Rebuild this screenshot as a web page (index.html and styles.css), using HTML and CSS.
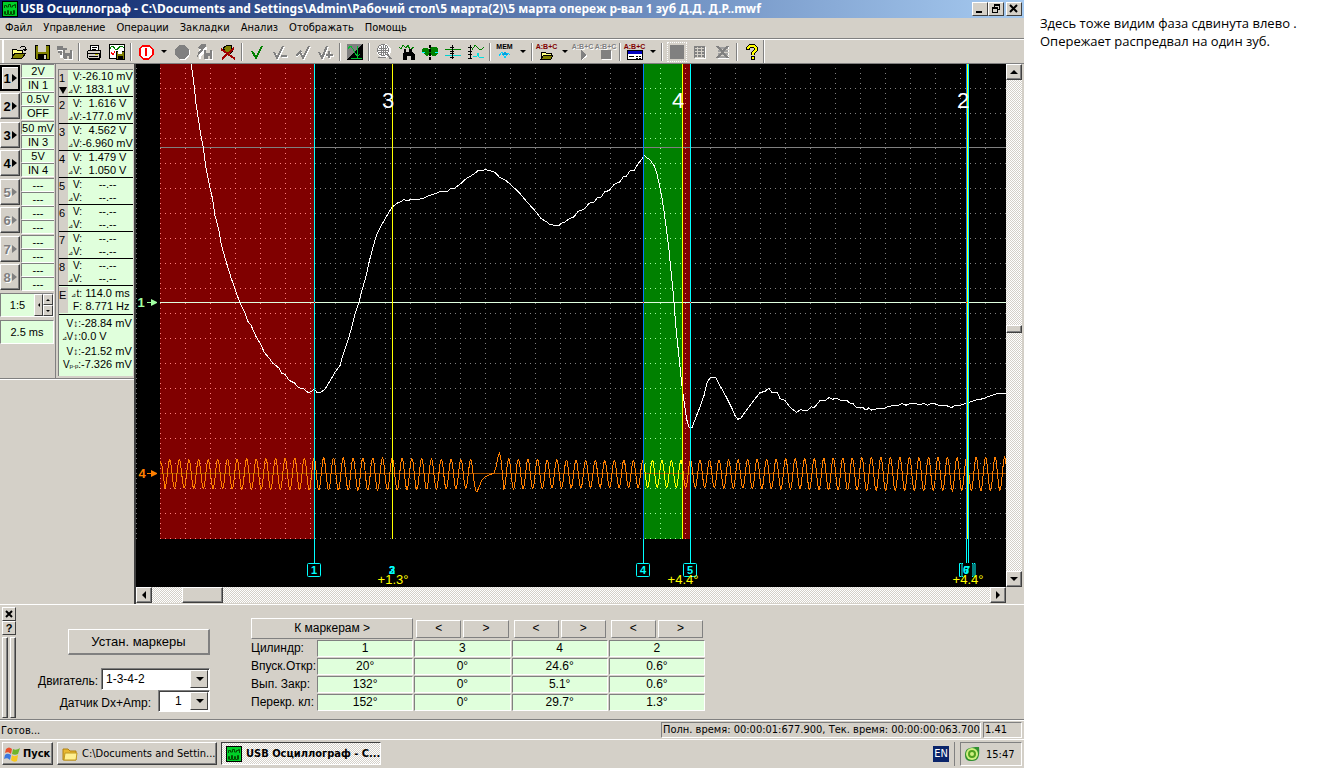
FILE: index.html
```html
<!DOCTYPE html>
<html lang="ru">
<head>
<meta charset="utf-8">
<title>USB Осциллограф</title>
<link rel="stylesheet" href="styles.css">
</head>
<body>
<svg class="defs" aria-hidden="true">
  <symbol id="i-scope" viewBox="0 0 16 16"><rect width="16" height="16" fill="#000"/><rect x="1" y="1" width="14" height="14" fill="#00d028"/><path d="M2.500 7V4.500h2V6h2V3.500h2V6h2V4.500h2V3.500h1V7M2.500 13.500v-3h1v3h2v-4h1v4h2v-3h1v3h2v-4h1v4" fill="none" stroke="#005000"/></symbol>
  <symbol id="i-open" viewBox="0 0 16 16"><path d="M1 14V5h4l1 1h5v3" fill="#ffff80" stroke="#000"/><path d="M1 14l3-5h11l-4 5z" fill="#808000" stroke="#000"/><path d="M9 3h1l1-1h2l1 1v2M12 5h4M13 6h2" fill="none" stroke="#000"/></symbol>
  <symbol id="i-save" viewBox="0 0 16 16"><path d="M1 1h14v14H2l-1-1z" fill="#808000" stroke="#000"/><rect x="4" y="1" width="8" height="7" fill="#d4d0c8"/><rect x="4" y="10" width="9" height="5" fill="#000"/><rect x="10" y="11" width="2" height="4" fill="#d4d0c8"/></symbol>
  <symbol id="i-saves" viewBox="0 0 16 16"><path d="M0 2h5v2h4v3H0zM2 8h3v5H2zM6 6h9v9H6z" fill="#fff" transform="translate(1 1)"/><path d="M0 2h6v2h4v2H0zM1 7h4v4H3V9H1zM6 6h9v9H7l-1-1z" fill="#808080"/><path d="M8 6h5v3H8zM10 12h2v3h-2z" fill="#d4d0c8"/></symbol>
  <symbol id="i-print" viewBox="0 0 16 16"><path d="M4 6l1-5h8l-1 5" fill="#fff" stroke="#000"/><path d="M6 3h5M6 5h4" stroke="#000"/><path d="M1 8l2-2h12l-1 8H2z" fill="#d4d0c8" stroke="#000"/><path d="M1 9h12M3 12h9M13 9v5M3 15h11" stroke="#000"/><rect x="9" y="10" width="3" height="1" fill="#c0c000"/></symbol>
  <symbol id="i-plotsave" viewBox="0 0 16 16"><rect x=".5" y=".5" width="15" height="14" fill="#fff" stroke="#000"/><path d="M1 5c2-5 3-3 5 0s4-3 6-3 2 2 3 2" fill="none" stroke="#008000"/><path d="M2 8l2 3 2-4" fill="none" stroke="red"/><path d="M7 7h8v8H7z" fill="#808000" stroke="#000"/><path d="M9 7h4v3H9z" fill="#fff"/><path d="M9 12h5v3H9z" fill="#000"/></symbol>
  <symbol id="i-power" viewBox="0 0 16 16"><path d="M5 1.500h6l3.500 3.500v6L11 14.500H5L1.500 11V5z" fill="#fff" stroke="#f00" stroke-width="2"/><path d="M8 4v8" stroke="#f00" stroke-width="2"/></symbol>
  <symbol id="i-rec" viewBox="0 0 16 16"><circle cx="9" cy="9" r="7" fill="#fff"/><circle cx="8" cy="8" r="7" fill="#808080"/></symbol>
  <symbol id="i-hand" viewBox="0 0 16 16"><path d="M1 4l4-3 4 1v4h6v9H7V8L3 11v3H1z" fill="#fff" transform="translate(1 1)"/><path d="M0 4l4-4h5v3L6 5v2l-4 3-2 4 1-6 3-3zM7 6h8v9H7z" fill="#808080"/><path d="M9 6h4v3H9zM11 12h2v3h-2z" fill="#d4d0c8"/></symbol>
  <symbol id="i-nohand" viewBox="0 0 16 16"><path d="M3 4l5-3h3v4l2 2-4 4-4-4z" fill="#808000" stroke="#000"/><path d="M1 5l14 10M14 4L2 15" stroke="#a00000" stroke-width="2"/></symbol>
  <symbol id="i-check" viewBox="0 0 16 16"><path d="M3 7l4 7L13 2" fill="none" stroke="#008000" stroke-width="2"/></symbol>
  <symbol id="i-checkr" viewBox="0 0 16 16"><path d="M3 9l3 6L12 3M10 13h6" fill="none" stroke="#fff" stroke-width="2"/><path d="M2 8l3 6L11 2M9 12h6" fill="none" stroke="#808080" stroke-width="2"/></symbol>
  <symbol id="i-checkl" viewBox="0 0 16 16"><path d="M6 9l3 6L15 3M1 13l5-5" fill="none" stroke="#fff" stroke-width="2"/><path d="M5 8l3 6L14 2M1 12l5-5" fill="none" stroke="#808080" stroke-width="2"/></symbol>
  <symbol id="i-checkp" viewBox="0 0 16 16"><path d="M2 9l3 6L10 3M8 12h8M12 8v7" fill="none" stroke="#fff" stroke-width="2"/><path d="M1 8l3 6L9 2M8 11h7M11 7v7" fill="none" stroke="#808080" stroke-width="2"/></symbol>
  <symbol id="i-xy" viewBox="0 0 16 16"><rect width="16" height="16" fill="#000"/><path d="M0 0h15L0 15z" fill="#808080"/><path d="M1 5l2-3h1l6 10h1l2-2M10 2v12M4 14.500h11" fill="none" stroke="#00c030"/></symbol>
  <symbol id="i-find" viewBox="0 0 16 16"><circle cx="8" cy="7" r="7" fill="#fff"/><circle cx="7" cy="6" r="5.500" fill="none" stroke="#808080"/><path d="M3 4h8M2 6h10M3 8h8M5 2v9M7 1v11M9 2v9" stroke="#808080"/><path d="M11 10l4 5" stroke="#808080" stroke-width="2"/><path d="M2 13h8" stroke="#808080"/></symbol>
  <symbol id="i-bino" viewBox="0 0 16 16"><path d="M0 3l2 2 2-4 3 3 2-3 2 5 4-3" fill="none" stroke="#008000"/><path d="M5 5h2v3h3V5h3v3l3 3v5h-4v-4H8v4H4v-5l1-3z" fill="#000"/></symbol>
  <symbol id="i-wave1" viewBox="0 0 16 16"><path d="M0 5l2-1h3l2 2 2-3h5l2 2v4l-2 3h-4l-2-3-2 3H4L2 9H0z" fill="#008000"/><path d="M0 8.500h3M13 8.500h3" stroke="#00ffff"/><path d="M8 1v15" stroke="#000" stroke-width="2" stroke-dasharray="3 1"/></symbol>
  <symbol id="i-wave2" viewBox="0 0 16 16"><path d="M0 5h16" stroke="#008000"/><path d="M0 11h16" stroke="#00d0d0"/><path d="M7 1v14M5 3h4M5 7h4M5 9h4M5 13h4" stroke="#000"/></symbol>
  <symbol id="i-wave3" viewBox="0 0 16 16"><path d="M4 6c3-6 4-5 6-2s4 2 6-1" fill="none" stroke="#008000"/><path d="M5 12h4l1-3 1 4h5" fill="none" stroke="#00e0e0"/><path d="M2 1v14M0 3h4M0 7h4M0 10h4M0 14h4" stroke="#000"/></symbol>
  <symbol id="i-folder" viewBox="0 0 16 10"><path d="M2 9V2h4l1 1h5v2" fill="#ffff80" stroke="#000"/><path d="M2 9l3-4h9l-2 4z" fill="#808000" stroke="#000"/></symbol>
  <symbol id="i-play" viewBox="0 0 16 10"><path d="M7 1l6 5-6 4z" fill="#fff"/><path d="M6 0l6 5-6 5z" fill="#808080"/></symbol>
  <symbol id="i-stop" viewBox="0 0 16 10"><path d="M4 1h10v9H4z" fill="#fff"/><path d="M3 0h10v9H3z" fill="#808080"/></symbol>
  <symbol id="i-panel" viewBox="0 0 16 10"><path d="M.5.5h15v9H.5z" fill="#fff" stroke="#000"/><path d="M1 1h14v3H1z" fill="#0000c0"/><path d="M2 6h5M9 6h2M12 6h2M9 8h2M12 8h2" stroke="#000"/></symbol>
  <symbol id="i-memwave" viewBox="0 0 16 10"><path d="M2 6l3-4 3 6 3-5 2 2" fill="none" stroke="#00d0ff"/><path d="M5 5l3-4 3 4z" fill="#00a0e0"/></symbol>
  <symbol id="i-grid" viewBox="0 0 16 16"><path d="M3 3h11v12H3z" fill="#fff"/><path d="M2 2h11v12H2z" fill="#808080"/><path d="M3 4h9M3 7h9M3 10h9M3 13h9M5 3v11M9 3v11" stroke="#d4d0c8"/></symbol>
  <symbol id="i-gridx" viewBox="0 0 16 16"><path d="M3 3h11v12H3z" fill="#fff"/><path d="M3 3h10v11H3z" fill="#a0a0a0"/><path d="M2 5h12M2 8h12M2 11h12" stroke="#d4d0c8"/><path d="M2 2l11 12M13 2L2 14" stroke="#808080" stroke-width="2"/></symbol>
  <symbol id="i-help" viewBox="0 0 16 16"><path d="M4 6V4l2-2h4l2 2v2L9 9v2" fill="none" stroke="#000" stroke-width="4"/><path d="M7 12h4v4H7z" fill="#000"/><path d="M4 5V4l2-2h4l2 2v2L9 9v2" fill="none" stroke="#ff0" stroke-width="2"/><path d="M8 13h2v2H8z" fill="#ff0"/></symbol>
</svg>

<div class="desktop">
  <div class="screen">
    <header class="titlebar">
      <svg class="i16"><use href="#i-scope"/></svg>
      <h1>USB Осциллограф - C:\Documents and Settings\Admin\Рабочий стол\5 марта(2)\5 марта опереж р-вал 1 зуб Д.Д. Д.Р..mwf</h1>
      <div class="winbtns">
        <button class="winbtn" aria-label="Свернуть"><svg width="12" height="10"><path d="M2 7h6v2H2z"/></svg></button>
        <button class="winbtn" aria-label="Восстановить"><svg width="12" height="10"><path d="M4 0h6v6H8V5h1V2H5v1H4zM2 3h6v6H2zm1 2v3h4V5z" fill-rule="evenodd"/></svg></button>
        <button class="winbtn close" aria-label="Закрыть"><svg width="12" height="10"><path d="M2 1l7 7M9 1L2 8" stroke="#000" stroke-width="2"/></svg></button>
      </div>
    </header>

    <nav class="menubar">
      <button>Файл</button><button>Управление</button><button>Операции</button><button>Закладки</button><button>Анализ</button><button>Отображать</button><button>Помощь</button>
    </nav>

    <div class="toolbar-row">
      <div class="toolbar">
        <button class="tool" aria-label="Открыть"><svg class="i16"><use href="#i-open"/></svg></button>
        <button class="tool" aria-label="Сохранить"><svg class="i16"><use href="#i-save"/></svg></button>
        <button class="tool" aria-label="Сохранить все"><svg class="i16"><use href="#i-saves"/></svg></button>
        <span class="sep"></span>
        <button class="tool" aria-label="Печать"><svg class="i16"><use href="#i-print"/></svg></button>
        <button class="tool" aria-label="Сохранить рисунок"><svg class="i16"><use href="#i-plotsave"/></svg></button>
        <span class="sep"></span>
        <button class="tool" aria-label="Питание"><svg class="i16"><use href="#i-power"/></svg></button>
        <button class="drop" aria-label="Меню питания"></button>
        <button class="tool" aria-label="Запись"><svg class="i16"><use href="#i-rec"/></svg></button>
        <button class="tool" aria-label="Захват"><svg class="i16"><use href="#i-hand"/></svg></button>
        <button class="tool" aria-label="Сброс"><svg class="i16"><use href="#i-nohand"/></svg></button>
        <span class="sep"></span>
        <button class="tool" aria-label="Отметить"><svg class="i16"><use href="#i-check"/></svg></button>
        <button class="tool" aria-label="Снять"><svg class="i16"><use href="#i-checkr"/></svg></button>
        <button class="tool" aria-label="Назад"><svg class="i16"><use href="#i-checkl"/></svg></button>
        <button class="tool" aria-label="Вперед"><svg class="i16"><use href="#i-checkp"/></svg></button>
        <span class="sep"></span>
        <button class="tool" aria-label="XY"><svg class="i16"><use href="#i-xy"/></svg></button>
        <span class="sep"></span>
        <button class="tool" aria-label="Поиск"><svg class="i16"><use href="#i-find"/></svg></button>
        <button class="tool" aria-label="Найти сигнал"><svg class="i16"><use href="#i-bino"/></svg></button>
        <button class="tool" aria-label="Уровень"><svg class="i16"><use href="#i-wave1"/></svg></button>
        <button class="tool" aria-label="Разделить"><svg class="i16"><use href="#i-wave2"/></svg></button>
        <button class="tool" aria-label="Масштаб"><svg class="i16"><use href="#i-wave3"/></svg></button>
        <span class="sep"></span>
        <button class="tool stacked"><b class="mem">MEM</b><svg class="i10"><use href="#i-memwave"/></svg></button>
        <button class="drop" aria-label="Меню памяти"></button>
        <span class="sep"></span>
        <button class="tool stacked"><b class="abc">A:B+C</b><svg class="i10"><use href="#i-folder"/></svg></button>
        <button class="drop" aria-label="Меню сценариев"></button>
        <button class="tool stacked"><b class="abc off">A:B+C</b><svg class="i10"><use href="#i-play"/></svg></button>
        <button class="tool stacked"><b class="abc off">A:B+C</b><svg class="i10"><use href="#i-stop"/></svg></button>
        <span class="sep"></span>
        <button class="tool stacked"><b class="abc">A:B+C</b><svg class="i10"><use href="#i-panel"/></svg></button>
        <button class="drop" aria-label="Меню панелей"></button>
        <span class="sep"></span>
        <button class="tool" aria-label="Стоп"><span class="stopbox"></span></button>
        <button class="tool" aria-label="Сетка"><svg class="i16"><use href="#i-grid"/></svg></button>
        <button class="tool" aria-label="Убрать сетку"><svg class="i16"><use href="#i-gridx"/></svg></button>
        <span class="sep"></span>
        <button class="tool" aria-label="Справка"><svg class="i16"><use href="#i-help"/></svg></button>
      </div>
    </div>

    <main class="work">
      <aside class="side">
        <div class="channels">
          <div class="ch"><button class="sel">1</button><span>2V</span><span>IN 1</span></div>
          <div class="ch"><button>2</button><span>0.5V</span><span>OFF</span></div>
          <div class="ch"><button>3</button><span>50 mV</span><span>IN 3</span></div>
          <div class="ch"><button>4</button><span>5V</span><span>IN 4</span></div>
          <div class="ch off"><button disabled>5</button><span>---</span><span>---</span></div>
          <div class="ch off"><button disabled>6</button><span>---</span><span>---</span></div>
          <div class="ch off"><button disabled>7</button><span>---</span><span>---</span></div>
          <div class="ch off"><button disabled>8</button><span>---</span><span>---</span></div>
          <div class="ratio"><span>1:5</span><button class="wide" aria-label="Сброс масштаба"><i class="tri left"></i></button><div class="spin"><button aria-label="Больше"><i class="tri up"></i></button><button aria-label="Меньше"><i class="tri down"></i></button></div></div>
          <div class="timebase">2.5 ms</div>
        </div>
        <div class="meters">
          <div class="m"><b>1<i class="tri down big"></i></b><em>V:</em><span>-26.10 mV</span><em><small>⊿</small>V:</em><span>183.1 uV</span></div>
          <div class="m"><b>2</b><em>V:</em><span>1.616 V</span><em><small>⊿</small>V:</em><span>-177.0 mV</span></div>
          <div class="m"><b>3</b><em>V:</em><span>4.562 V</span><em><small>⊿</small>V:</em><span>-6.960 mV</span></div>
          <div class="m"><b>4</b><em>V:</em><span>1.479 V</span><em><small>⊿</small>V:</em><span>1.050 V</span></div>
          <div class="m"><b>5</b><em>V:</em><span>--.--</span><em><small>⊿</small>V:</em><span>--.--</span></div>
          <div class="m"><b>6</b><em>V:</em><span>--.--</span><em><small>⊿</small>V:</em><span>--.--</span></div>
          <div class="m"><b>7</b><em>V:</em><span>--.--</span><em><small>⊿</small>V:</em><span>--.--</span></div>
          <div class="m"><b>8</b><em>V:</em><span>--.--</span><em><small>⊿</small>V:</em><span>--.--</span></div>
          <div class="m"><b>E</b><em><small>⊿</small>t:</em><span>114.0 ms</span><em>F:</em><span>8.771 Hz</span></div>
          <dl class="range">
            <dt>V↕:</dt><dd>-28.84 mV</dd>
            <dt><small>⊿</small>V↕:</dt><dd>0.0 V</dd>
            <dt>V↕:</dt><dd>-21.52 mV</dd>
            <dt>V<small>p-p</small>:</dt><dd>-7.326 mV</dd>
          </dl>
        </div>
      </aside>

      <section class="scope">
        <svg class="plot" viewBox="0 0 870 523" preserveAspectRatio="xMinYMin slice" role="img" aria-label="Осциллограмма">
          <defs>
            <pattern id="dots" width="25" height="25" patternUnits="userSpaceOnUse"><path fill="#808080" d="M24 4h1v1h-1zM24 9h1v1h-1zM24 14h1v1h-1zM24 19h1v1h-1zM4 24h1v1h-1zM9 24h1v1h-1zM14 24h1v1h-1zM19 24h1v1h-1zM24 24h1v1h-1z"/></pattern>
            <pattern id="dotsRed" width="25" height="25" patternUnits="userSpaceOnUse"><path fill="#ff8080" d="M24 4h1v1h-1zM24 9h1v1h-1zM24 14h1v1h-1zM24 19h1v1h-1zM4 24h1v1h-1zM9 24h1v1h-1zM14 24h1v1h-1zM19 24h1v1h-1zM24 24h1v1h-1z"/></pattern>
            <pattern id="dotsGreen" width="25" height="25" patternUnits="userSpaceOnUse"><path fill="#a0ffa0" d="M24 4h1v1h-1zM24 9h1v1h-1zM24 14h1v1h-1zM24 19h1v1h-1zM4 24h1v1h-1zM9 24h1v1h-1zM14 24h1v1h-1zM19 24h1v1h-1zM24 24h1v1h-1z"/></pattern>
            <clipPath id="inGreen"><rect x="508" width="38" height="475"/></clipPath>
          </defs>
          <rect width="870" height="523" fill="#000"/>
          <rect x="24" width="846" height="475" fill="url(#dots)"/>
          <path d="M.5 4v471" stroke="#808080" stroke-dasharray="1 4"/>
          <g><rect x="24" width="154" height="475" fill="#800000"/><rect x="24" width="154" height="475" fill="url(#dotsRed)"/></g>
          <g><rect x="547" width="7" height="475" fill="#800000"/><rect x="547" width="7" height="475" fill="url(#dotsRed)"/></g>
          <g><rect x="508" width="38" height="475" fill="#008000"/><rect x="508" width="38" height="475" fill="url(#dotsGreen)"/></g>
          <path d="M24 83.5h846" stroke="#808080"/>
          <path d="M24 409.5h846" stroke="#a05000"/>
          <path d="M24 238.5h846" stroke="#e0ffe0"/>
          <path id="wave4" class="trace orange"/>
          <path id="wave4g" class="trace yellow" clip-path="url(#inGreen)"/>
          <path id="wave1" class="trace white"/>
          <g class="cursors">
            <path d="M178.5 0v499M554.5 0v499M507.5 475v24M830.5 475v24M832.5 0v499" stroke="#0ff"/>
            <path d="M507.5 0v475M830.5 0v475" stroke="#0080ff"/>
            <path d="M256.5 0v475M546.5 0v475M831.5 0v475" stroke="#ff0"/>
            <path d="M178 238h1v1h-1zM507 238h1v1h-1zM554 238h1v1h-1zM830 238h1v1h-1z" fill="#f00"/>
          </g>
          <g class="boxes">
            <rect x="171.500" y="499.500" width="13" height="13" rx="1"/><rect x="500.500" y="499.500" width="13" height="13" rx="1"/><rect x="547.500" y="499.500" width="13" height="13" rx="1"/>
            <path d="M825.500 499.500h-2v13h2M827 499.500h-1v13h1M836 499.500h1v13h-1M838 499.500h1v13h-1"/>
          </g>
          <g class="ids"><text x="178" y="510">1</text><text x="256" y="510">2</text><text x="256" y="510">3</text><text x="507" y="510">4</text><text x="554" y="510">5</text><text x="830" y="510">6</text><text x="831" y="510">7</text></g>
          <g class="angles"><text x="257" y="520">+1.3°</text><text x="547" y="520">+4.4°</text><text x="832" y="520">+4.4°</text></g>
          <g class="cyl"><text x="252" y="44">3</text><text x="542" y="44">4</text><text x="827" y="44">2</text></g>
          <g class="chid"><text x="5" y="243" fill="#a0ffa0">1</text><path d="M11 238h4v-3l6 3v1l-6 3v-3h-4z" fill="#a0ffa0"/><text x="6" y="414" fill="#ff8000">4</text><path d="M11 409h4v-3l6 3v1l-6 3v-3h-4z" fill="#ff8000"/></g>
        </svg>
        <div class="vscroll"><button aria-label="Вверх"><i class="tri up"></i></button><i class="gap-a"></i><i class="thumb"></i><i class="gap-b"></i><button aria-label="Вниз"><i class="tri down"></i></button></div>
        <div class="hscroll"><button aria-label="Влево"><i class="tri left"></i></button><i class="gap-a"></i><i class="thumb"></i><i class="gap-b"></i><button aria-label="Вправо"><i class="tri right"></i></button></div>
      </section>
    </main>

    <section class="dock">
      <div class="dock-grip"><button aria-label="Закрыть панель"><svg width="9" height="9"><path d="M1 1l6 6M7 1L1 7" stroke="#000" stroke-width="2"/></svg></button><button>?</button><div class="bars"><i></i><i></i></div></div>
      <form class="setup">
        <button type="button" class="btn set">Устан. маркеры</button>
        <div class="field engine"><label for="engine">Двигатель:</label><span class="combo"><select id="engine"><option>1-3-4-2</option></select></span></div>
        <div class="field"><label for="sensor">Датчик Dx+Amp:</label><span class="combo small"><select id="sensor"><option>1</option></select></span></div>
      </form>
      <table class="angles-table">
        <colgroup><col class="names"><col><col><col><col></colgroup>
        <thead><tr>
          <td colspan="2"><button class="btn goto">К маркерам &gt;</button></td>
          <td><div class="pair"><button class="btn">&lt;</button><button class="btn">&gt;</button></div></td>
          <td><div class="pair"><button class="btn">&lt;</button><button class="btn">&gt;</button></div></td>
          <td><div class="pair"><button class="btn">&lt;</button><button class="btn">&gt;</button></div></td>
        </tr></thead>
        <tbody>
          <tr><th scope="row">Цилиндр:</th><td>1</td><td>3</td><td>4</td><td>2</td></tr>
          <tr><th scope="row">Впуск.Откр:</th><td>20°</td><td>0°</td><td>24.6°</td><td>0.6°</td></tr>
          <tr><th scope="row">Вып. Закр:</th><td>132°</td><td>0°</td><td>5.1°</td><td>0.6°</td></tr>
          <tr><th scope="row">Перекр. кл:</th><td>152°</td><td>0°</td><td>29.7°</td><td>1.3°</td></tr>
        </tbody>
      </table>
    </section>

    <div class="status"><span class="ready">Готов...</span><span class="cell">Полн. время: 00:00:01:677.900, Тек. время: 00:00:00:063.700</span><span class="cell ver">1.41</span></div>

    <footer class="taskbar">
      <button class="task start"><svg class="i18" viewBox="0 0 18 18"><path d="M2 4c2-2 4-2 6 0L7 9C5 7 3 7 1 8z" fill="#e8502c"/><path d="M9 4c2 1 4 1 7-1l-2 6c-2 1-4 1-6 0z" fill="#6fb52c"/><path d="M1 10c2-2 4-1 6 0l-1 5c-2-2-4-2-6-1z" fill="#3a78e0"/><path d="M8 10c2 2 4 1 6 0l-1 6c-2 1-4 1-6-1z" fill="#f8c820"/></svg>Пуск</button>
      <button class="task"><svg class="i16" viewBox="0 0 16 16"><path d="M1 3h5l2 2h6v9H1z" fill="#e8b830" stroke="#b08010"/><path d="M3 7h12l-1 7H2z" fill="#fff090" stroke="#c09820"/></svg><span>C:\Documents and Settin...</span></button>
      <button class="task active"><svg class="i16"><use href="#i-scope"/></svg><span>USB Осциллограф - C...</span></button>
      <span class="lang">EN</span>
      <div class="tray"><svg class="i16" viewBox="0 0 16 16"><path d="M1 9c0-6 3-8 14-8 1 10-1 14-7 14C5 15 1 15 1 9z" fill="#309030"/><circle cx="8" cy="8" r="6" fill="#d0f080"/><circle cx="8" cy="8" r="3" fill="none" stroke="#50a020" stroke-width="2"/></svg><time>15:47</time></div>
    </footer>
  </div>

  <p class="note">Здесь тоже видим фаза сдвинута влево .<br>Опережает распредвал на один зуб.</p>
</div>
<script src="scope.js"></script>
</body>
</html>
```
FILE: styles.css
```css
:root {
  --face: #d4d0c8;
  --shade: #808080;
  --dark: #404040;
  --lcd: #e0ffdc;
  --ui: "Liberation Sans", Arial, sans-serif;
  --tahoma: "DejaVu Sans Condensed", "DejaVu Sans", sans-serif;
  --dither: repeating-conic-gradient(#fff 0 25%, #d4d0c8 0 50%) 0 0 / 2px 2px;
}

* { box-sizing: border-box; }
body { margin: 0; background: #fff; color: #000; font: 11px/13px var(--ui); }
button, select { font: inherit; color: inherit; margin: 0; padding: 0; border-radius: 0; }
button { border: 0; background: none; white-space: nowrap; }
.defs { display: none; }
.i16 { width: 16px; height: 16px; flex: none; }
.i18 { width: 18px; height: 18px; flex: none; }
.i10 { width: 16px; height: 10px; flex: none; }

.desktop { display: flex; min-height: 100vh; }
.screen { flex: 1; min-width: 0; display: flex; flex-direction: column; background: var(--face); }
.note { width: 313px; flex: none; margin: 0; padding: 14px 0 0 16px; font: 13px/18px "Open Sans", "Noto Sans", sans-serif; white-space: nowrap; }

.titlebar { display: flex; align-items: center; height: 18px; padding: 0 2px; gap: 2px; background: linear-gradient(90deg, #0a246a, #a6caf0); }
.titlebar h1 { flex: 1; min-width: 0; overflow: hidden; margin: 0; color: #fff; font: bold 12px/16px "Noto Sans", sans-serif; white-space: nowrap; }
.winbtns { display: flex; }
.winbtn { display: grid; place-items: center; width: 16px; height: 14px; background: var(--face); border: 1px solid; border-color: #fff var(--dark) var(--dark) #fff; }
.close { margin-left: 2px; }

.menubar { display: flex; align-items: center; height: 20px; gap: 11px; padding: 0 5px; font: 11px/16px var(--tahoma); }

.toolbar-row { height: 26px; border-top: 1px solid var(--shade); border-bottom: 1px solid var(--shade); box-shadow: inset 0 1px #fff; padding-top: 1px; display: flex; }
.toolbar { display: flex; align-items: center; height: 23px; padding-left: 3px; margin-left: 3px; border-left: 1px solid #fff; border-right: 1px solid var(--shade); box-shadow: -1px 0 #fff, 1px 0 #fff; }
.toolbar svg { shape-rendering: crispEdges; }
.tool { width: 23px; height: 22px; display: flex; flex-direction: column; align-items: center; justify-content: center; }
.stacked { overflow: visible; }
.stacked b { font: bold 7px/7px var(--ui); }
.abc { color: #800000; }
.abc.off { color: var(--shade); text-shadow: 1px 1px #fff; }
.sep { width: 2px; height: 18px; margin: 0 2px; border-left: 1px solid var(--shade); border-right: 1px solid #fff; }
.drop { width: 13px; height: 22px; display: grid; place-items: center; }
.drop::before { content: ""; border: 3px solid transparent; border-top-color: #000; border-bottom: 0; }
.stopbox { width: 18px; height: 18px; border: 2px solid var(--face); outline: 1px dotted #fff; background: var(--shade); }

.work { flex: 1; min-height: 0; display: grid; grid-template-columns: 134px 1fr; }
.side { display: grid; grid-template-columns: 56px 78px; align-content: start; border-bottom: 1px solid var(--shade); margin-bottom: auto; box-shadow: 0 1px #fff; }
.channels { border-right: 1px solid var(--shade); display: flex; flex-direction: column; }
.ch { display: grid; grid-template: 14px 14px / 20px 33px; column-gap: 1px; height: 28px; }
.ch:nth-child(even) { margin-bottom: 1px; }
.ch button { grid-row: 1 / 3; margin: 1px 0; border: 1px solid; border-color: #fff var(--dark) var(--dark) #fff; box-shadow: inset -1px -1px var(--shade); font: bold 13px/13px var(--ui); display: flex; align-items: center; justify-content: center; gap: 1px; }
.ch button::after { content: ""; border: 4px solid transparent; border-left: 5px solid #000; border-right: 0; }
.ch button.sel { border: 2px solid #000; box-shadow: inset 1px 1px #fff; }
.ch span { background: var(--lcd); border-top: 1px solid var(--shade); border-left: 1px solid var(--shade); border-bottom: 1px solid #fff; text-align: center; line-height: 13px; }
.ch.off button { color: var(--shade); text-shadow: 1px 1px #fff; }
.ch.off button::after { border-left-color: var(--shade); }
.ratio, .timebase { height: 24px; margin-right: 1px; background: var(--lcd); border: 1px solid; border-color: var(--shade) #fff #fff var(--shade); text-align: center; line-height: 22px; }
.ratio { display: flex; margin-top: 1px; }
.ratio > span { flex: 1; }
.ratio button { display: grid; place-items: center; background: var(--face); border: 1px solid; border-color: #fff var(--dark) var(--dark) #fff; }
.wide { width: 9px; }
.spin { width: 10px; display: grid; grid-template-rows: 1fr 1fr; }
.timebase { margin-top: 3px; }

.tri { width: 0; height: 0; border: 4px solid transparent; display: block; }
.tri.up { border-top: 0; border-bottom-color: #000; }
.tri.down { border-bottom: 0; border-top-color: #000; }
.tri.left { border-left: 0; border-right-color: #000; }
.tri.right { border-right: 0; border-left-color: #000; }
.ratio .tri { border-width: 2px; }
.tri.big { border-width: 7px 4px 0; margin-top: 2px; }

.meters { margin: 5px 1px 2px 2px; border-top: 1px solid var(--shade); border-left: 1px solid var(--shade); background: var(--lcd); }
.m { display: grid; grid-template: 13px 13px / 9px 14px 51px; height: 27px; border-bottom: 1px solid #000; white-space: nowrap; }
.m b { grid-row: 1 / 3; background: var(--face); font-weight: normal; padding-top: 2px; }
.m em { font-style: normal; font-size: 10px; text-align: right; }
.m span { text-align: center; }
.m:nth-child(9) { height: 29px; padding-top: 1px; }
.meters small { font-size: 6px; }
.range { margin: 2px 0 3px; display: grid; grid-template-columns: 22px 1fr; white-space: nowrap; }
.range dt { font-size: 10px; text-align: right; }
.range dd { margin: 0; }

.scope { min-width: 0; min-height: 0; display: grid; grid-template: minmax(0, 1fr) 16px / minmax(0, 1fr) 16px; padding: 0 2px 1px 0; border-left: 2px solid var(--dark); }
.plot { display: block; width: 100%; height: 100%; background: #000; }
.trace { fill: none; shape-rendering: crispEdges; }
.white { stroke: #fff; }
.orange { stroke: #ff8000; }
.yellow { stroke: #ff0; }
.plot pattern path, .cursors { shape-rendering: crispEdges; }
.boxes { fill: none; stroke: #0ff; }
.plot text { text-anchor: middle; }
.ids { font: bold 11px var(--ui); fill: #0ff; }
.angles { font: 13px var(--ui); fill: #ff0; }
.cyl { font: 22px var(--ui); fill: #fff; }
.chid { font: bold 13px var(--ui); }
.vscroll, .hscroll { display: flex; background: var(--dither); }
.vscroll { flex-direction: column; }
.vscroll button, .hscroll button, .thumb { width: 16px; height: 16px; flex: none; display: grid; place-items: center; background: var(--face); border: 1px solid; border-color: #fff var(--dark) var(--dark) #fff; box-shadow: inset -1px -1px var(--shade); }
.vscroll .thumb { height: 8px; }
.hscroll .thumb { width: 41px; }
.vscroll .gap-a { flex: 245 0 0; }
.vscroll .gap-b { flex: 238 0 0; }
.hscroll .gap-a { flex: 30 0 0; }
.hscroll .gap-b { flex: 767 0 0; }

.dock { display: flex; height: 115px; border-top: 1px solid #fff; font-size: 12px; }
.dock-grip { width: 14px; margin: 2px 0 1px 2px; display: flex; flex-direction: column; }
.dock-grip button { height: 14px; display: grid; place-items: center; font: bold 11px/11px var(--ui); border: 1px solid; border-color: #fff var(--dark) var(--dark) #fff; }
.bars { flex: 1; margin-top: 2px; display: flex; justify-content: space-between; }
.bars i { width: 6px; border: 1px solid; border-color: #fff var(--dark) var(--dark) #fff; box-shadow: inset -1px 0 var(--shade); }
.btn { border: 1px solid; border-color: #fff var(--shade) var(--shade) #fff; }
.setup { width: 194px; padding-top: 24px; display: flex; flex-direction: column; align-items: flex-end; }
.set { width: 142px; height: 26px; font-size: 13px; border-right-width: 2px; border-bottom-width: 2px; }
.field { display: flex; align-items: center; gap: 3px; }
.field label { white-space: nowrap; padding-top: 4px; }
.field.engine { margin-top: 13px; }
.combo { position: relative; width: 109px; height: 22px; display: block; border: 1px solid; border-color: var(--shade) #fff #fff var(--shade); background: #fff; }
.combo::after { content: ""; position: absolute; right: 5px; top: 8px; border: 4px solid transparent; border-top: 4px solid #000; border-bottom: 0; pointer-events: none; }
.combo::before { content: ""; position: absolute; right: 1px; top: 1px; bottom: 1px; width: 16px; background: var(--face); border: 1px solid; border-color: #fff var(--dark) var(--dark) #fff; pointer-events: none; }
.combo select { appearance: none; display: block; width: 100%; height: 100%; border: 1px solid var(--dark); border-right: 0; border-bottom: 0; background: transparent; padding: 0 20px 0 3px; font-size: 12px; }
.combo.small { width: 52px; margin-left: 4px; }
.combo.small select { padding-left: 15px; }

.angles-table { margin: 12px 0 0 40px; align-self: start; border-spacing: 1px; table-layout: fixed; width: 456px; }
.angles-table .names { width: 65px; }
.angles-table td, .angles-table th { padding: 0; height: 17px; line-height: 15px; }
.angles-table thead td { height: 20px; vertical-align: middle; }
.angles-table th { font-weight: normal; text-align: left; white-space: nowrap; }
.angles-table tbody td { background: var(--lcd); border: 1px solid; border-color: var(--shade) #fff #fff var(--shade); text-align: center; }
.goto { width: 100%; height: 21px; display: block; }
.pair { display: flex; gap: 2px; padding: 0 2px; }
.pair .btn { flex: 1; height: 18px; }

.status { display: flex; height: 21px; align-items: center; gap: 2px; padding: 2px 2px 1px 1px; border-top: 1px solid var(--shade); border-bottom: 1px solid #fff; box-shadow: inset 0 1px #fff; font: 11px/13px var(--tahoma); }
.ready { flex: 1; }
.cell { height: 16px; padding: 0 1px; border: 1px solid; border-color: var(--shade) #fff #fff var(--shade); white-space: nowrap; width: 320px; overflow: hidden; }
.cell.ver { width: 39px; }

.taskbar { display: flex; align-items: flex-start; height: 28px; padding: 2px 2px 0; gap: 4px; font: 11px/13px var(--tahoma); }
.task { display: flex; align-items: center; gap: 4px; width: 160px; height: 23px; padding: 0 4px; border: 1px solid; border-color: #fff var(--dark) var(--dark) #fff; box-shadow: inset -1px -1px var(--shade); }
.start { width: 51px; padding: 0 1px; gap: 1px; font-weight: bold; }
.task.active { background: var(--dither); border-color: var(--dark) #fff #fff var(--dark); box-shadow: none; font-weight: bold; }
.lang { margin-left: auto; margin-top: 4px; width: 16px; height: 16px; background: #0a246a; color: #fff; line-height: 16px; text-align: center; }
.tray { display: flex; align-items: center; gap: 6px; width: 62px; height: 24px; margin-left: 7px; padding-left: 3px; border: 1px solid; border-color: var(--shade) #fff #fff var(--shade); box-shadow: -5px 0 var(--face), -6px 0 var(--shade); }
```
FILE: scope.js
```js
// Samples are stored in thirds of a pixel, as x, y pairs.
const STEP = 3;
const pressure = [
  166,0, 170,30, 176,80, 180,118, 188,170, 196,220, 202,250, 210,310, 220,360, 230,405, 236,450, 248,495, 256,540, 270,590, 286,642, 300,682, 312,716, 328,748,
  335,770, 345,782, 360,816, 376,843, 385,864, 400,881, 410,896, 420,903, 430,912, 437,926, 447,930, 460,948, 475,955, 487,969, 505,974, 517,985, 527,980, 535,974, 543,984, 555,983, 567,974, 583,948, 597,923, 612,903, 622,868, 636,828, 645,796,
  656,752, 668,715, 676,685, 690,635, 700,590, 712,545, 722,510, 735,485, 750,458, 768,428, 785,415, 795,412, 803,404, 810,408, 825,406, 850,404, 866,400, 880,393, 900,387, 910,382, 935,380, 943,373, 953,373, 960,368, 975,357, 990,343, 1010,331, 1028,317, 1040,319, 1048,315, 1070,321, 1080,326, 1090,338, 1110,348, 1130,366, 1150,385, 1165,403, 1173,412, 1180,420, 1200,442, 1215,462, 1235,474, 1240,480, 1255,482, 1270,483, 1275,476, 1285,474, 1300,463, 1310,459,
  1314,457, 1327,440, 1344,434, 1360,416, 1374,413, 1384,400, 1394,400, 1406,382, 1420,378, 1434,360, 1452,352, 1462,337, 1470,337, 1482,319, 1495,317, 1507,296, 1518,284, 1525,272, 1532,280, 1542,286, 1554,303, 1562,325, 1570,360, 1577,395, 1584,440, 1592,500, 1600,565, 1606,630, 1613,700,
  1618,768, 1624,828, 1632,908, 1640,983, 1648,1038, 1654,1073, 1660,1090, 1668,1090, 1678,1063, 1690,1033, 1704,993, 1714,953, 1722,940, 1739,940, 1750,960, 1760,978, 1772,1000, 1787,1030, 1797,1053, 1805,1064, 1814,1062, 1827,1043, 1847,1016, 1872,984, 1887,981, 1898,971, 1908,984, 1924,984, 1932,1002, 1947,1008, 1962,1028, 1972,1036, 1982,1044, 1992,1036, 2002,1037, 2014,1038, 2026,1027, 2035,1029, 2052,1008, 2067,1008, 2080,999, 2090,1004, 2102,1001, 2112,1007, 2132,1007, 2142,1016, 2152,1018, 2160,1028, 2172,1030, 2180,1028, 2190,1037, 2198,1030, 2207,1037, 2227,1032, 2242,1033, 2252,1028, 2272,1022, 2285,1023, 2297,1017, 2310,1022, 2322,1017, 2340,1018, 2352,1021, 2362,1016, 2375,1022, 2385,1017, 2397,1018, 2412,1024, 2430,1023, 2447,1029, 2455,1024, 2470,1023, 2492,1016, 2517,1007, 2540,1003, 2552,998, 2570,992, 2582,988, 2600,987, 2610,987
];

let d = "";
for (let i = 0; i < pressure.length; i += 2) {
  d += (i ? "L" : "M") + (pressure[i] / STEP).toFixed(1) + " " + (pressure[i + 1] / STEP + 0.5).toFixed(1);
}
document.getElementById("wave1").setAttribute("d", d);

// Crank sensor: first peak x, last peak x, number of periods, amplitude.
const MID = 409.5;
function teeth(from, to, periods, lift) {
  const w = (to - from) / periods;
  let s = "";
  for (let x = from - w / 2; x <= to + w / 2 + 0.1; x += 0.6) {
    const c = Math.cos((x - from) / w * 2 * Math.PI);
    s += "L" + x.toFixed(1) + " " + (MID - c * lift(x) + 0.5).toFixed(1);
  }
  return s;
}
const crank = "M24 397L26 402"
  + teeth(33.7, 178, 15, x => 14 + (x - 33.7) / 70)
  + teeth(187.7, 334.7, 15, x => 16 - Math.max(0, x - 260) / 40)
  + "L340 427L341 428L343 423L346 416L349 413L353 411L358 409L360 403L362 393L363.5 388L365 396"
  + teeth(372.7, 440, 7, x => 15 - (x - 372.7) / 50)
  + teeth(449.8, 868.7, 44, x => 13.5 + Math.min(3, Math.max(0, (x - 560) / 60)));
document.getElementById("wave4").setAttribute("d", crank);
document.getElementById("wave4g").setAttribute("d", crank);
```
